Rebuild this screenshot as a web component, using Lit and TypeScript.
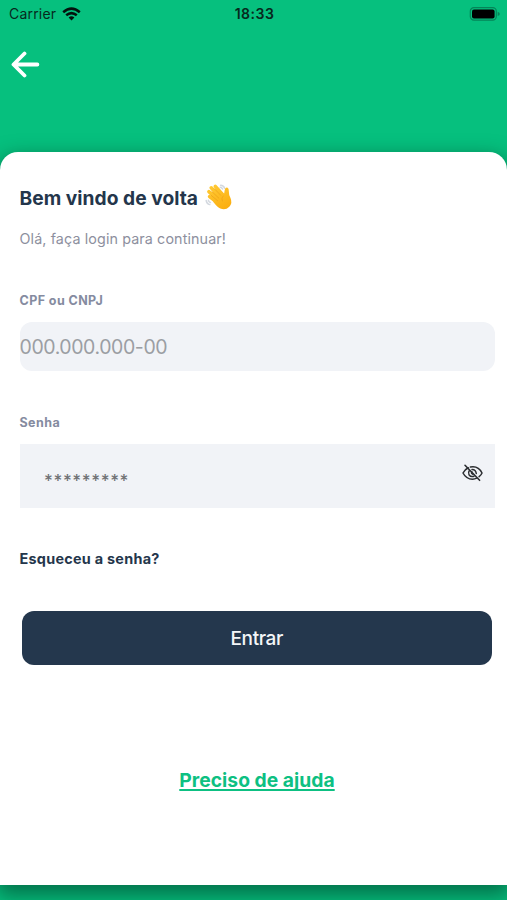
import { LitElement, html, css } from "lit";
import { customElement } from "lit/decorators.js";

@customElement("status-bar")
class StatusBar extends LitElement {
  static styles = css`
    :host { display: grid; grid-template-columns: 1fr auto 1fr; align-items: center; height: 27px; padding: 0 7px 1px 9px; color: #06291d; }
    .left { display: flex; align-items: center; gap: 6px; font-size: 14px; letter-spacing: 0.2px; }
    .time { font-size: 14px; font-weight: 600; letter-spacing: 0.5px; }
    .right { display: flex; justify-content: flex-end; }
    svg { display: block; }
  `;
  render() {
    return html`
      <div class="left">
        <span>Carrier</span>
        <svg width="19" height="14" viewBox="0 0 19 14">
          <g fill="none" stroke="#03120d" stroke-width="2.5">
            <path d="M1.2 5.2Q9.5 -2 17.8 5.2" />
            <path d="M4.2 8.3Q9.5 3.9 14.8 8.3" />
          </g>
          <path d="M6.6 10.4Q9.5 8 12.4 10.4L9.5 13.5Z" fill="#03120d" />
        </svg>
      </div>
      <div class="time">18:33</div>
      <div class="right">
        <svg width="31" height="14" viewBox="0 0 31 14">
          <rect x="1.3" y="0.7" width="26" height="12.4" rx="3.6" fill="none" stroke="#058458" stroke-width="1.2" />
          <rect x="3" y="2.4" width="22.6" height="9" rx="2" fill="#000" />
          <path d="M28.7 4.8Q30.8 5.6 30.8 6.9T28.7 9Z" fill="#058458" />
        </svg>
      </div>
    `;
  }
}

@customElement("waving-hand")
class WavingHand extends LitElement {
  static styles = css`
    :host { display: block; width: 28px; height: 28px; margin-bottom: 2px; }
    svg { display: block; }
  `;
  render() {
    return html`
      <svg width="28" height="28" viewBox="0 0 28 28">
        <defs>
          <linearGradient id="skin" gradientUnits="userSpaceOnUse" x1="6" y1="3" x2="20" y2="26">
            <stop offset="0" stop-color="#ffc933" />
            <stop offset="1" stop-color="#fbae10" />
          </linearGradient>
        </defs>
        <g fill="none" stroke="#d3d8df" stroke-width="1.5" stroke-linecap="round">
          <path d="M15.6 2.2Q18.6 2.4 19.7 5.2M15.2 4.3Q17 4.5 17.6 6" />
          <path d="M1.2 17.6Q1.6 20.6 4.8 21.6M3.4 17.3Q3.8 19 5.4 19.5" />
        </g>
        <g fill="none" stroke="url(#skin)" stroke-width="3.6" stroke-linecap="round">
          <path d="M10.3 3.4L18 12" />
          <path d="M6.2 4.8L15 14" />
          <path d="M3.9 8.7L13 17" />
          <path d="M4.6 13.6L13 20" />
        </g>
        <path d="M10.8 5.9L18.3 12.8Q19.5 10.5 19.6 7.5Q20 4.6 21.7 4.6Q23.8 4.7 23.8 8Q23.7 11.6 25.5 15Q27.7 20 24.3 23.8Q20.5 27.7 15.3 25.6Q12.7 24.4 8.5 19.2L6.5 10Z" fill="url(#skin)" />
        <path d="M9.3 5.6L15.6 12.2M6.7 8.4L13.8 15.1M6.2 12.4L12.6 17.7M18.2 12.9Q15.8 15 17.3 18" fill="none" stroke="#eda019" stroke-width="0.7" stroke-linecap="round" />
      </svg>
    `;
  }
}

@customElement("app-root")
class AppRoot extends LitElement {
  static styles = css`
    :host {
      display: flex; flex-direction: column; height: 900px; overflow: hidden;
      background: #06c07e; font-family: Inter, "Liberation Sans", sans-serif; color: #24364b;
    }
    .nav { height: 124px; flex: none; padding: 23px 0 0 11px; box-sizing: border-box; }
    svg { display: block; }
    .card {
      flex: none; height: 733px; box-sizing: border-box; background: #fff;
      border-radius: 18px 18px 0 0; box-shadow: 0 8px 20px 3px rgba(0, 45, 28, 0.52);
      padding: 30px 12.5px 0 19.5px; display: flex; flex-direction: column;
    }
    .title { display: flex; align-items: center; gap: 7px; height: 32px; font-size: 19.2px; font-weight: 650; letter-spacing: 0.03px; white-space: nowrap; }
    .subtitle { margin-top: 15px; line-height: 20px; font-size: 14.3px; color: #8d8f9e; letter-spacing: 0.12px; }
    .label { font-size: 12.5px; line-height: 16px; font-weight: 650; color: #858ba0; letter-spacing: 0.42px; }
    .cpf-label { margin-top: 44px; }
    .field { background: #f1f3f7; display: flex; align-items: center; }
    .cpf { margin-top: 13px; height: 49px; border-radius: 12px; font-size: 19.5px; letter-spacing: -0.42px; color: #9b9ea3; }
    .senha-label { margin-top: 44px; }
    .senha { margin-top: 13px; height: 64px; padding: 0 12px 0 24.5px; justify-content: space-between; }
    .mask { font-size: 17px; font-weight: 500; letter-spacing: 0.6px; color: #707275; padding-top: 9px; }
    .eye { margin-bottom: 6px; }
    .forgot { margin-top: 41px; line-height: 20px; font-size: 14.4px; font-weight: 650; letter-spacing: 0.27px; }
    .enter {
      margin: 41.5px 2.5px 0 2px; height: 54.5px; flex: none; border: 0; border-radius: 12px; background: #24374d;
      color: #f4f6f8; font: 500 19px Inter, "Liberation Sans", sans-serif; letter-spacing: -0.4px; padding: 1px 0 0;
    }
    .help {
      align-self: center; margin-top: 103px; line-height: 24px; font-size: 19.3px; font-weight: 650; letter-spacing: 0.02px; color: #0dc082;
      text-decoration: underline; text-decoration-thickness: 1.5px; text-underline-offset: 2px; text-decoration-skip-ink: none;
    }
  `;
  render() {
    return html`
      <status-bar></status-bar>
      <div class="nav">
        <svg width="29" height="28" viewBox="0 0 29 28" fill="none" stroke="#fff" stroke-width="3.8" stroke-linecap="round" stroke-linejoin="round">
          <path d="M13.5 2.5L2.5 13.5L13.5 24.5M3 13.5H26.4" />
        </svg>
      </div>
      <main class="card">
        <div class="title"><span>Bem vindo de volta</span><waving-hand></waving-hand></div>
        <div class="subtitle">Olá, faça login para continuar!</div>
        <div class="label cpf-label">CPF ou CNPJ</div>
        <div class="field cpf"><span>000.000.000-00</span></div>
        <div class="label senha-label">Senha</div>
        <div class="field senha">
          <span class="mask">*********</span>
          <svg class="eye" width="21" height="20" viewBox="0 0 21 20" fill="none" stroke="#2b2d30" stroke-width="1.5" stroke-linecap="round">
            <path d="M6.3 4.8Q3 6.3 1 10Q4.3 16.2 10.5 16.2Q12.8 16.2 14.6 15.2M8.4 4Q16.4 2.5 20 10Q19 12.3 17.1 13.7" />
            <path d="M7.4 7.5Q5.8 9.5 7 11.7Q8.9 14.4 12 13.2M10 6.4Q13.7 6.3 14.3 10.5M9.9 8.8Q8.8 10.3 10.6 11.2" />
            <path d="M3 2.3L17.6 17.3" stroke-width="1.6" />
          </svg>
        </div>
        <div class="forgot">Esqueceu a senha?</div>
        <button class="enter">Entrar</button>
        <a class="help">Preciso de ajuda</a>
      </main>
    `;
  }
}
